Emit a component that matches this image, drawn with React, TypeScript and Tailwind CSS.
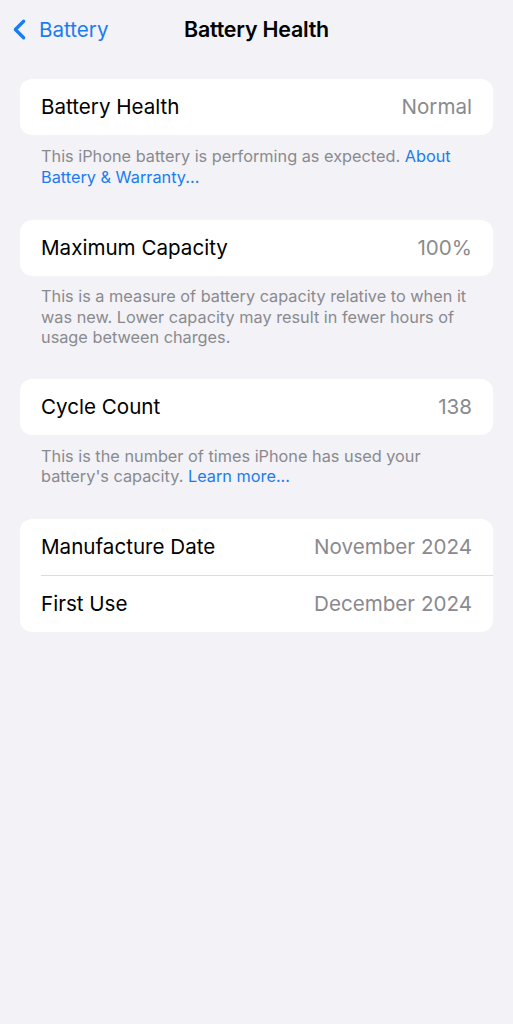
import { ChevronLeft } from "lucide-react";

const Row = ({ label, value }: { label: string; value: string }) => (
  <div className="flex h-[56px] items-center justify-between pr-[21px]">
    <span className="text-[#000]">{label}</span>
    <span className="text-[#8a8a8e]">{value}</span>
  </div>
);

export default function App() {
  return (
    <div
      className="min-h-[1024px] w-full bg-[#f2f2f7] text-[20.6px] leading-[24px]"
      style={{ fontFamily: "Inter, 'Liberation Sans', sans-serif" }}
    >
      {/* nav bar */}
      <div className="relative flex h-[58px] items-center justify-center">
        <div className="absolute left-[3px] top-[13px] flex items-center text-[#1a7cf0]">
          <ChevronLeft size={33} strokeWidth={2.4} />
          <span className="ml-[3px] text-[20.6px]">Battery</span>
        </div>
        <span className="text-[21.4px] font-semibold tracking-[-0.2px] text-black">Battery Health</span>
      </div>

      <div className="flex flex-col px-[20px] pt-[21px]">
        <div className="rounded-[12px] bg-white pl-[21px]">
          <Row label="Battery Health" value="Normal" />
        </div>
        <p className="px-[21px] pt-[11px] pb-[33px] text-[16.3px] leading-[20.5px] text-[#8a8a8e]">
          This iPhone battery is performing as expected.{" "}
          <span className="text-[#1a7cf0]">About Battery &amp; Warranty...</span>
        </p>

        <div className="rounded-[12px] bg-white pl-[21px]">
          <Row label="Maximum Capacity" value="100%" />
        </div>
        <p className="px-[21px] pt-[10px] pb-[31px] text-[16.3px] leading-[20.5px] text-[#8a8a8e]">
          This is a measure of battery capacity relative to when it was new. Lower capacity may result in fewer hours of usage between charges.
        </p>

        <div className="rounded-[12px] bg-white pl-[21px]">
          <Row label="Cycle Count" value="138" />
        </div>
        <p className="px-[21px] pt-[11px] pb-[32px] text-[16.3px] leading-[20.5px] text-[#8a8a8e]">
          This is the number of times iPhone has used your battery's capacity.{" "}
          <span className="text-[#1a7cf0]">Learn more...</span>
        </p>

        <div className="rounded-[12px] bg-white pl-[21px]">
          <Row label="Manufacture Date" value="November 2024" />
          <div className="h-px bg-[#dcdce0]" />
          <Row label="First Use" value="December 2024" />
        </div>
      </div>
    </div>
  );
}
